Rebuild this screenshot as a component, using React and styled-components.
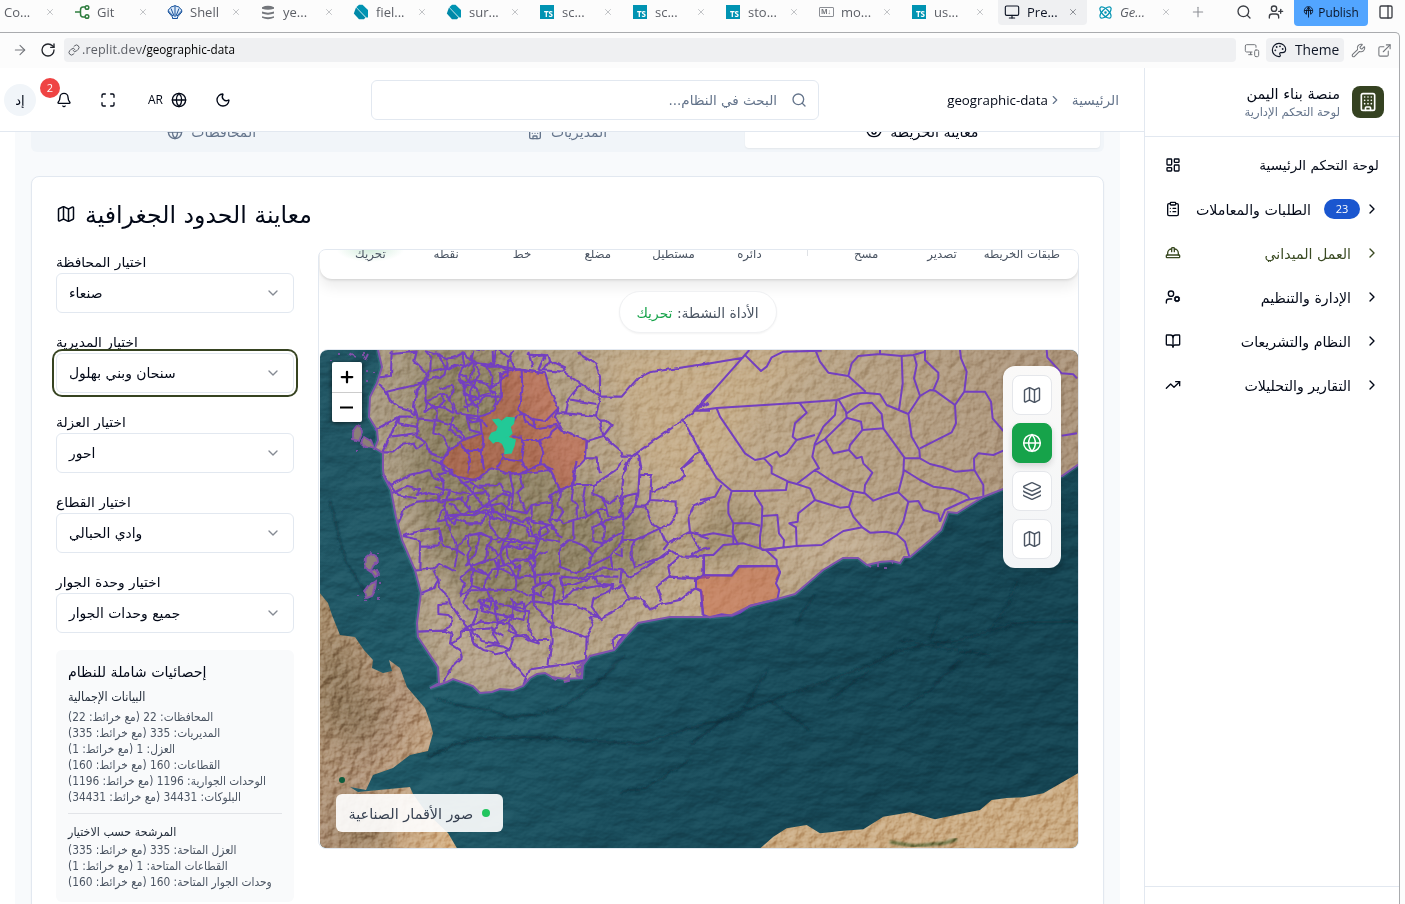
import React from "react";
import styled, { createGlobalStyle, css } from "styled-components";
import {
  ArrowRight, Bell, BookOpen, Building, ChevronDown, ChevronRight, ClipboardList,
  ExternalLink, Eye, Globe, HardHat, Layers, LayoutDashboard, Link as LinkIcon, Map as MapIcon,
  Maximize, Monitor, MonitorSmartphone, Moon, Palette, PanelRight, Plus, RotateCw,
  Search, TrendingUp, UserCog, UserPlus, Wrench, X, Atom,
} from "lucide-react";

const Global = createGlobalStyle`
  * { box-sizing: border-box; }
  html, body { margin: 0; height: 904px; overflow: hidden; background: #fcfcfc; }
  body { font-family: "Open Sans", "DejaVu Sans Condensed", "DejaVu Sans", sans-serif; color: #020817; }
  svg { display: block; flex: none; }
`;

const Screen = styled.div`
  width: 1405px; height: 904px; overflow: hidden;
  display: flex; flex-direction: column; background: #fcfcfc;
`;
const Ar = styled.span`
  direction: rtl; white-space: nowrap; line-height: 1; display: inline-block;
  padding-top: ${(p) => (p.$inner ? 0 : 2)}px;
  font-family: ${(p) => (p.$narrow ? '"DejaVu Sans Condensed", ' : "")}"DejaVu Sans", sans-serif;
  font-size: ${(p) => p.$size || 13.9}px;
  color: ${(p) => p.$color || "inherit"};
`;

/* ---------- workspace tabs ---------- */
const TabBar = styled.div`height: 32px; flex: none; display: flex; align-items: flex-start; overflow: hidden;`;
const Tabs = styled.div`display: flex; gap: 4px; margin-left: -25px; flex: none;`;
const Tab = styled.div`
  width: 89px; height: 25px; padding: 0 9px 1px 6px; display: flex; align-items: center;
  border-radius: 0 0 4px 4px; font-size: 13px; color: ${(p) => (p.$active ? "#0e1525" : "#5c5f66")};
  background: ${(p) => (p.$active ? "#eff0f2" : "transparent")};
  font-style: ${(p) => (p.$italic ? "italic" : "normal")};
  > svg:last-child { margin-left: auto; color: ${(p) => (p.$active ? "#777b82" : "#b5b7bb")}; }
`;
const TabIcon = styled.span`width: 16px; height: 16px; margin-right: 7px; display: flex; align-items: center; justify-content: center;`;
const TsBadge = styled.span`
  width: 14px; height: 14px; background: #0093b2; color: #fff; font: 700 8px/15px "Open Sans", sans-serif;
  padding-top: 1px; text-align: right; padding-right: 1px;
`;
const MdBadge = styled.span`
  width: 15px; height: 10px; border: 1px solid #8b8e94; border-radius: 1px; color: #74777c;
  font: 700 7px/8px "Open Sans", sans-serif; text-align: center;
`;
const BarIcons = styled.div`display: flex; align-items: center; gap: 16px; height: 25px; padding-bottom: 1px; color: #3b3e44;`;
const PlusCell = styled.span`margin: 0 30px 0 10px; color: #8b8e94;`;
const PublishBtn = styled.div`
  width: 74px; height: 26px; margin: 0 10px; border-radius: 0 0 4px 4px; background: #52a5ff; color: #0a1426;
  display: flex; align-items: center; justify-content: center; gap: 4px; font: 500 11.8px "Open Sans", sans-serif; padding-bottom: 2px;
`;

/* ---------- preview frame ---------- */
const Frame = styled.div`
  width: 1400px; height: 872px; border-top: 1px solid #a9abae; border-right: 1px solid #a9abae;
  border-radius: 0 5px 0 0; display: flex; flex-direction: column; overflow: hidden;
`;
const AddressRow = styled.div`
  height: 35px; flex: none; display: flex; align-items: center; padding: 0 8px 1px 12px; color: #74777c;
  > svg:nth-child(2) { margin-left: 12px; }
  > svg:nth-child(4) { margin-left: 8px; }
  > svg:last-child { margin-left: 11px; }
`;
const Url = styled.div`
  width: 1172px; height: 24px; margin-left: 8px; background: #eff0f2; border-radius: 4px; display: flex; align-items: center;
  flex: none; padding-left: 4px; font-size: 12.6px; letter-spacing: .15px; color: #5c5f66; line-height: 1;
  b { font-weight: 400; color: #000; font-size: 11.7px; letter-spacing: 0; }
  svg { margin-right: 2px; }
`;
const ThemeBtn = styled.div`
  width: 78px; height: 24px; margin: 0 7px 0 6px; background: #eff0f2; border-radius: 4px; color: #0e1525;
  display: flex; align-items: center; padding: 0 0 1px 5px; gap: 8px; font-size: 13.8px; flex: none;
`;
const AppShell = styled.div`flex: 1; min-height: 0; display: flex; background: #fff;`;
const Main = styled.div`width: 1144px; flex: none; display: flex; flex-direction: column; background: #fff;`;

const Header = styled.header`
  height: 64px; flex: none; border-bottom: 1px solid #e2e8f0; display: flex; align-items: center; padding: 0 25px 0 4px;
`;
const Avatar = styled.div`
  width: 32px; height: 32px; border-radius: 50%; background: #f1f5f9; display: flex; align-items: center; justify-content: center;
`;
const BellBox = styled.div`position: relative; margin-left: 20px; margin-right: 28px;`;
const Count = styled.span`
  position: absolute; left: -16px; top: -14px; width: 20px; height: 20px; border-radius: 50%; background: #ef4444; color: #fff;
  font-size: 11px; line-height: 20px; text-align: center;
`;
const Lang = styled.div`display: flex; align-items: center; gap: 8px; margin: 0 28px 0 32px; font-size: 12px;`;
const SearchBox = styled.div`
  width: 448px; height: 40px; margin-left: 140px; border: 1px solid #e2e8f0; border-radius: 6px;
  display: flex; align-items: center; justify-content: flex-end; gap: 14px; padding-right: 11px; color: #64748b;
`;
const Crumbs = styled.div`margin-left: auto; display: flex; align-items: center; font-size: 13.3px; svg { color: #64748b; margin: 0 10px 0 0; }`;

const Scroll = styled.div`
  flex: 1; min-height: 0; overflow: hidden; margin: 0 24px 0 15px; background: #f8fafc; padding: 0 16px;
`;
const Segments = styled.div`
  height: 40px; width: 1073px; margin-top: -20px; background: #f1f5f9; border-radius: 6px; padding: 3px 4px 3px 3px; display: flex;
`;
const Segment = styled.div`
  flex: 1; display: flex; align-items: center; justify-content: center; gap: 8px; border-radius: 4px; height: 33px;
  color: ${(p) => (p.$active ? "#020817" : "#64748b")};
  ${(p) => p.$active && css`background: #fff; box-shadow: 0 1px 2px rgba(0,0,0,.06);`}
`;
const Card = styled.section`
  width: 1073px; height: 900px; margin-top: 24px; border: 1px solid #e2e8f0; border-radius: 8px; background: #fff; padding: 24px;
  box-shadow: 0 1px 2px rgba(0,0,0,.05);
`;
const CardTitle = styled.div`
  display: flex; align-items: center; gap: 9px; height: 26px; margin-bottom: 22px;
  svg { margin-top: -1px; }
  span { padding-top: 4px; }
`;
const Split = styled.div`display: flex; align-items: flex-start; gap: 24px;`;
const Filters = styled.div`width: 238px; flex: none;`;
const Field = styled.div`height: 80px; display: flex; flex-direction: column;`;
const FieldLabel = styled.label`height: 24px; padding-top: 5px; line-height: 1; display: flex;`;
const Select = styled.div`
  height: 40px; border: 1px solid #e2e8f0; border-radius: 6px; background: #fff; padding: 0 12px;
  display: flex; align-items: center; justify-content: space-between;
  svg { color: #858a93; }
  ${(p) => p.$focus && css`box-shadow: 0 0 0 2px #fff, 0 0 0 4px #364321;`}
`;
const Stats = styled.div`
  margin-top: 1px; height: 252px; background: #f9fafb; border-radius: 6px; padding: 12px 12px; display: flex; flex-direction: column; align-items: flex-start;
`;
const StatHead = styled.div`height: ${(p) => p.$h}px; display: flex; align-items: center; padding-top: ${(p) => p.$drop || 0}px;`;
const StatLine = styled.div`height: 16px; display: flex; align-items: center;`;
const Rule = styled.div`height: 1px; width: 214px; background: #e2e4e8; margin: 8px 0 6px;`;

const MapPanel = styled.div`
  width: 761px; height: 600px; border: 1px solid #e2e8f0; border-radius: 8px; overflow: hidden; background: #fff;
  display: flex; flex-direction: column; align-items: center; padding: 0 1px;
`;
const Toolbar = styled.div`
  width: 758px; height: 29px; flex: none; border-radius: 0 0 12px 12px;
  box-shadow: 0 8px 14px rgba(0,0,0,.08), 0 1px 3px rgba(0,0,0,.13); background: #fff;
`;
const ToolRow = styled.div`height: 29px; overflow: hidden; display: flex; padding: 0 16px 0 13px;`;
const Tool = styled.div`
  width: ${(p) => p.$w || 75.8}px; flex: none; display: flex; justify-content: center; margin-top: -3px; white-space: nowrap;
  ${(p) => p.$active && css`background: radial-gradient(ellipse 34px 13px at 50% 2px, rgba(22,163,74,.2), transparent);`}
`;
const ToolSplit = styled.div`width: 1px; height: 6px; flex: none; background: #dfe2e6; margin: 0 20px 0 20px;`;
const ActiveTool = styled.div`
  margin: 12px 2px 16px 0; height: 42px; width: 158px; flex: none; border-radius: 21px; border: 1px solid #f0f1f3; background: #fff;
  box-shadow: 0 1px 2px rgba(0,0,0,.05); display: flex; align-items: center; justify-content: center; padding-top: 2px;
`;
const MapView = styled.div`
  width: 758px; height: 499px; flex: none; position: relative; border-radius: 8px 8px 6px 6px; overflow: hidden; border-top: 1px solid #e2e8f0;
`;
const ZoomCtl = styled.div`
  position: absolute; left: 12px; top: 12px; width: 30px; height: 60px; border-radius: 2px; background: #fff; box-shadow: 0 1px 5px rgba(0,0,0,.65);
  display: flex; flex-direction: column;
`;
const ZoomKey = styled.div`
  flex: 1; display: flex; align-items: center; justify-content: center; color: #000;
  & + & { border-top: 1px solid #ccc; }
`;
const LayerPanel = styled.div`
  position: absolute; left: 683px; top: 16px; width: 58px; height: 202px; border-radius: 12px; padding: 9px;
  background: linear-gradient(#faf9f8, #f3f5f7); display: flex; flex-direction: column; gap: 8px;
  box-shadow: 0 2px 6px rgba(0,0,0,.12);
`;
const LayerKey = styled.div`
  height: 40px; border-radius: 8px; display: flex; align-items: center; justify-content: center;
  border: 1px solid ${(p) => (p.$active ? "#16a34a" : "#e5e7eb")};
  background: ${(p) => (p.$active ? "#16a34a" : "#fff")}; color: ${(p) => (p.$active ? "#fff" : "#4b5563")};
  box-shadow: ${(p) => (p.$active ? "0 3px 6px rgba(0,0,0,.14)" : "none")};
`;
const MapCaption = styled.div`
  position: absolute; left: 16px; top: 444px; width: 167px; height: 38px; border-radius: 6px; background: rgba(255,255,255,.91);
  display: flex; align-items: center; justify-content: space-between; padding: 0 13px; color: #374151;
`;
const Dot = styled.i`width: 8px; height: 8px; border-radius: 50%; background: #22c55e;`;

/* ---------- side navigation ---------- */
const Side = styled.aside`flex: 1; border-left: 1px solid #e2e8f0; display: flex; flex-direction: column; background: #fff;`;
const Brand = styled.div`
  height: 69px; border-bottom: 1px solid #e2e8f0; display: flex; align-items: center; justify-content: flex-end; gap: 12px; padding-right: 15px;
`;
const BrandText = styled.div`display: flex; flex-direction: column; align-items: flex-end; gap: 3px;`;
const Logo = styled.div`
  width: 32px; height: 32px; border-radius: 8px; background: #354221; color: #fff; display: flex; align-items: center; justify-content: center;
`;
const Nav = styled.nav`flex: 1; padding: 8px 20px 0 20px; display: flex; flex-direction: column; gap: 4px;`;
const NavItem = styled.div`
  height: 40px; display: flex; align-items: center; color: ${(p) => (p.$accent ? "#3a4a22" : "#020817")};
  > span:first-of-type { margin-left: auto; }
`;
const NavBadge = styled.b`
  width: 36px; height: 20px; border-radius: 10px; background: #1a56cf; color: #fff; font-size: 11px; font-weight: 400;
  line-height: 20px; text-align: center; margin-left: 13px; margin-right: -9px;
`;
const NavChevron = styled.i`margin: 0 -1px 0 13px; display: flex;`;
const SideFoot = styled.div`height: 18px; border-top: 1px solid #e2e8f0;`;

/* ---------- small drawings ---------- */
const GitGlyph = () => (
  <svg width="16" height="16" viewBox="0 0 16 16" fill="none" stroke="#2f7d3f" strokeWidth="1.5">
    <path d="M1 8h5M12 3H9Q6.500 3 6.500 6v4q0 3 2.500 3h3" /><circle cx="13" cy="3.500" r="1.800" /><circle cx="13" cy="12.500" r="1.800" />
  </svg>
);
const ShellGlyph = () => (
  <svg width="16" height="16" viewBox="0 0 16 16" fill="#dceafa" stroke="#17529c" strokeWidth="1">
    <path d="M5.500 13 1.200 8Q.7 5 3 4.500 4 2 6 2.500 8 .5 10 2.500q2-.5 3 2 2.300.5 1.800 3.500L10.500 13v1.500h-5z" />
    <path d="M8 13V2M7 12 4 4.500M9 12l3-7.500M6 12 1.500 7M10 12l4.500-5" fill="none" />
  </svg>
);
const DatabaseGlyph = () => (
  <svg width="14" height="15" viewBox="0 0 14 15" fill="#74777c">
    <path d="M1 2.200Q7-.6 13 2.200v1.500Q7 6 1 3.700zM1 6.500Q7 8.800 13 6.500v2Q7 10.800 1 8.500zM1 11.200q6 2.300 12 0v1.600q-6 2.700-12 0z" />
  </svg>
);
const DartGlyph = () => (
  <svg width="16" height="16" viewBox="0 0 16 16">
    <path fill="#0093b2" d="M3.500 3 6 .8h3.500L15 6v7.500h-2L3.500 4z" />
    <path fill="#0089a8" d="M3 3.500 12.500 13.500 11 15.200H6L.8 9.500z" />
    <path fill="none" stroke="#fff" strokeWidth=".5" d="m3.200 3.200 10 10.500" />
  </svg>
);
const PublishGlyph = () => (
  <svg width="11" height="12" viewBox="0 0 11 12" fill="none" stroke="currentColor" strokeWidth=".9">
    <path d="M3.500 8.500A4.200 4.200 0 1 1 7.500 8.500M1.500 4.500h8M5.500 1v10.500M3.500 8Q2.500 4 5.500 1q3 3 2 7" />
  </svg>
);

/* ---------- map geometry ---------- */
const COAST = "M378 350L382 367 377 383 370 397 369 417 377 430 378 440 375 448 383 453 383 470 384 477 391 490 396 517 402 540 415 570 421 593 417 623 418 637 438 667 439 683 430 688 447 682 453 679 473 686 480 693 492 692 500 689 513 690 523 686 530 678 537 674 545 673 552 677 565 679 582 678 583 665 590 656 614 650 625 637 638 623 670 617 710 617 732 615 750 606 777 599 795 594 823 570 843 558 858 558 867 565 880 562 892 561 900 563 904 557 910 557 930 540 941 530 948 512 957 513 983 497 1003 489 1062 476 1079 464";
const LAND = COAST + "V349H378Z";
const AFRICA = "M319 592L328 603 332 615 340 635 355 637 364 650 373 660 372 668 383 673 392 671 389 660 400 668 407 687 425 708 430 722 433 733 428 751 410 755 393 768 373 775 366 790 350 787 358 792 410 787 413 794 426 812 448 833 458 850H319Z";
const SOMALIA = "M205 870L250 830 290 805 350 795 390 820 450 813 520 808 580 770 660 757 735 778 820 760 870 750 905 720 950 714 1000 712 1060 700 1120 665 1164 640V870Z";
const ORANGE = "M18 60L40 45 125 47 148 20 262 18 270 38 258 70 268 90 262 118 180 137 150 158 125 167 95 163 60 172 40 165 32 90 18 85Z";
const RED = "M575 400L625 388 705 400 720 450 745 505 735 530 760 575 830 600 828 655 795 690 790 735 750 750 720 690 640 700 590 700 545 685 495 720 440 710 395 670 420 625 460 600 515 580 510 530 550 515 575 470Z";
const GREEN = "M550 540L565 538 575 545 590 533 612 535 610 550 600 560 605 580 592 592 615 600 612 615 603 638 585 640 586 628 578 610 560 600 550 608 538 595 545 580 560 575 566 560Z";

const EAST = "M0 497L148 330M0 375L130 353M133 343L183 393 200 380 215 352 250 335 365 332M0 511L50 504 300 488 410 480 460 462 490 458 540 463 560 495 625 522 660 468 690 450 705 452 765 495 768 550 755 577 660 625M348 335L360 365 385 398 445 408 497 455M445 408L455 370 475 348 540 342 605 348 640 345 675 335M540 330V345M605 348L608 430 597 510M642 345L650 375 642 415 660 468M675 330V360L715 398 715 415 700 450M780 330L783 355 800 395 793 455 765 495M793 455H855L873 485 878 535 910 573M1040 330L1042 352 1085 400 1120 403 1131 415M1085 587L1131 580M625 522L635 590 658 630 660 655 615 655 550 565 487 570 483 545 440 533 438 515 415 478M438 522L480 492 515 488 545 522 550 565M410 480L405 525 370 560 345 610 337 650 357 685 345 690M440 533L375 597 400 640 447 630 450 615 487 570M375 597L345 615M447 630L470 655 485 650 490 670 517 698 495 735 493 758 520 782 565 765 595 757 610 700 612 655M50 505L60 530 135 640 165 660 192 655 215 680 215 700 265 725 290 732 345 690 390 720 450 752 493 760M298 488L320 518 285 550 278 590 290 600 260 640 240 650 230 635 192 655M290 600L345 585M0 630L50 715 95 753 165 753 258 750 262 725M0 780L45 770 65 735M95 753L85 790V820L100 850 98 880 115 915M290 732L330 745 345 780 420 803 447 800 460 758M345 780L295 820 293 845 268 850 288 862 290 918 185 930M165 753V765L187 800 185 855 180 890 180 920 187 930H230M187 828L232 825 237 880 252 900 250 925M98 850L150 850 180 857M290 918L365 915 430 873 487 862 510 878 560 875 590 883 615 905 628 950M447 800L460 830 487 862M595 757L625 785 610 845 590 883M625 785L655 783 670 810 715 822 720 845M612 690L660 720 700 740 760 748 800 765 810 778M660 655L690 672 730 682 765 695 823 690 822 655 835 640 880 645 910 632M823 690L850 735V770M720 845L735 810 800 780 850 770M0 888L40 880 100 890M100 890V910M12 945L40 945 70 915 130 910 200 932 230 960V978H115L95 1005 12 1007ZM230 978L240 995 228 1020";
const NORTH = "M245 332L243 408 207 412M245 342L320 335 313 362 350 400 340 430 230 455 207 435M230 455L240 480 265 500 300 510 318 525M195 570L230 550 268 530 310 530M345 425L320 450 312 500 322 530 322 590 350 610 360 640 400 655M218 637L250 637 275 615 310 608 320 625 345 610M225 625L240 590 320 580M215 640L240 590 255 555 268 530 265 550 320 560M320 535L380 540 380 510 345 480M490 332L485 355 500 370 550 375 548 332M610 332L600 350 615 388 570 400 575 470 520 470 500 500M555 375L615 388 705 400M650 340L705 345 685 390M655 332L668 385M665 350L715 345 720 362 765 382 755 395 685 390M720 362L700 390M760 395L810 430 870 470H935L985 413 1020 397 1200 370M808 332L812 345 855 370 870 410 870 470 858 530 870 545 880 588 930 630 935 650 965 650 985 635 1120 540 1170 500 1200 488M810 435L775 478 768 520 860 530M775 478L860 492M870 542L890 542 905 555 880 588 830 603M1120 540L1168 630 1115 687M1168 630L1200 680M1155 512L1200 460M1155 512H1200M985 635L995 690M965 650L940 690M745 505L740 520 768 520M830 603L828 655 860 655 865 690M510 530L440 520 430 490M515 580L480 570 470 530 510 540M400 655L420 625 400 590 370 580 375 540 430 555 470 600M460 600L420 570 430 530";
const REDLINES = "M635 388L637 450 625 510 640 520 670 540 705 545 745 505M515 580L520 600 515 640 522 690M470 630L480 660 475 700M515 630L470 630M605 590L635 590 640 630 635 665 600 660 580 655 560 685M635 600L690 600 700 640 690 670 730 690M640 520L620 530 605 545M640 520L645 545 680 565 740 555 760 575M580 655L580 640M690 600L720 590 725 575 745 560M450 610L475 640M635 665L650 690M670 540L675 565";
const SOUTH = "M218 45L243 75 300 45 360 30 370 55 400 65 385 45 430 30M365 0L395 10 400 30 440 50 460 70 520 50M245 100L260 95 290 80 330 90 320 105 350 98 385 105 385 120 320 125 285 145 262 195M243 75L265 105 320 115M400 65L400 90 385 125 460 115M400 130L410 165 430 190 440 175 470 190 515 190 540 145M275 228L320 215 388 205 390 240 385 260 330 260 328 330M275 228L330 240V260M388 205L400 255 440 270 465 285M315 332L370 325 390 310 435 335M332 400L370 385 385 360 370 330M385 360L390 385 415 410 420 430 465 495M415 430L385 432 385 462 415 465 425 475 422 500 400 512 320 515M400 512L425 520 420 550 450 570 455 590 430 615 400 665M420 550L455 530 455 510 480 510 490 550 520 570 560 580 600 570 610 530 640 525 665 540H718M455 510L510 485 600 490 620 520M465 495L480 510 540 505 580 530M585 575L605 605 648 655 660 628 715 620 725 540 722 505 740 500 830 532 828 600 775 612 715 620M640 675L660 628M830 532L850 495 838 470 870 475 920 450 958 415 990 415M722 505L730 495 728 430 668 425 640 445 610 440 560 430M668 425L690 460 730 495M728 430L765 415M958 415L935 375 850 415 845 440 870 475M870 475L800 435 735 430M990 410L1020 448 1060 430 1110 420 1155 385V355L1080 350 1040 380 1055 425M1155 355L1200 350M1155 385L1175 395 1178 465M1080 350L1075 320 1110 290 1140 290 1200 285M1180 290V345M1110 290L1080 270 1040 300 965 352 935 330 870 325 820 355 750 350M940 240H960L975 240 965 260 965 290 975 320 1060 290 1080 270M975 240L1050 205 1065 240 1075 250 1060 270M1075 250L1140 215 1170 270 1140 290M1140 215L1200 235M1170 270L1200 265M1050 205L1025 190 1005 140 1020 120 1100 125V160L1070 200 1050 205M1020 120L1025 45 990 45M1200 115L1150 140 1135 170 1140 215M1025 95L1110 60 1125 45 1115 25 1150 0M940 0L920 30 850 75 850 100 870 110 885 130 890 150 865 150 830 170 790 180 760 190 750 180 720 180 730 150 720 110 750 90 790 75 850 75M750 90L725 40 700 10 630 40M785 75L800 0M860 0L870 40M960 0L935 50 940 60 930 130 940 170 940 240M990 0L985 100 940 110 930 160M985 100L975 140 1005 140M870 110L900 130 925 110M975 140L945 180M865 150L875 190 850 200 850 245 880 250 885 200 875 190 935 165M890 150L895 170 920 175M845 282L880 250 940 215M750 260L775 240 820 255 845 285 838 320 800 340 750 320ZM790 180V240M838 320L900 290 940 240M905 290L910 325M935 265V290L915 280M935 330L930 370M630 40L600 45 610 90 605 150M630 40L640 80 620 100 650 160 600 150 575 130 520 140 490 100 460 70M520 140L580 100 605 110M650 160L665 135 720 125M665 135V185L720 195 740 220 760 230M720 180L740 220M545 145L590 180 650 200 655 230 690 225 690 205 720 195M655 230L750 245M790 75L785 120 800 135 800 180M825 80L820 110 830 170M750 90L745 140 760 155 740 185M735 390L710 365 670 380 668 425M728 430L735 390M765 415L790 390 850 380 910 375M750 350L760 375 790 375 850 350 925 350M750 350L755 375 765 415M850 350L860 370 910 375 900 400M690 350V375M750 340L680 345M905 540L925 525 945 525 910 570ZM420 130L460 165 485 165 520 140M410 120L450 115 485 155M600 570L580 560 550 555 525 560M560 430L520 420 515 450 550 460 640 480 645 460 600 440";

function mesh(x0, y0, x1, y1, step, seed) {
  let s = seed;
  const rnd = () => ((s = (s * 16807) % 2147483647) / 2147483647);
  const cols = Math.round((x1 - x0) / step);
  const rows = Math.round((y1 - y0) / step);
  const pts = [];
  for (let r = 0; r <= rows; r++) {
    pts.push([]);
    for (let c = 0; c <= cols; c++) {
      pts[r].push([x0 + (c + (rnd() - 0.5) * 0.9) * step, y0 + (r + (rnd() - 0.5) * 0.9) * step]);
    }
  }
  let d = "";
  const edge = (a, b) => {
    if (rnd() < 0.22) return;
    const mx = (a[0] + b[0]) / 2 + (rnd() - 0.5) * step * 0.6;
    const my = (a[1] + b[1]) / 2 + (rnd() - 0.5) * step * 0.6;
    d += `M${a[0].toFixed(1)} ${a[1].toFixed(1)}L${mx.toFixed(1)} ${my.toFixed(1)} ${b[0].toFixed(1)} ${b[1].toFixed(1)}`;
  };
  for (let r = 0; r <= rows; r++)
    for (let c = 0; c <= cols; c++) {
      if (c < cols) edge(pts[r][c], pts[r][c + 1]);
      if (r < rows) edge(pts[r][c], pts[r + 1][c]);
    }
  return d;
}
const DENSE = [
  mesh(430, 355, 476, 408, 11, 77), mesh(464, 384, 496, 422, 13, 31), mesh(476, 352, 506, 385, 16, 9),
  mesh(474, 538, 530, 578, 12, 123), mesh(454, 520, 558, 592, 19, 55), mesh(482, 598, 498, 614, 7, 812),
  mesh(472, 596, 530, 632, 20, 44), mesh(444, 478, 506, 522, 20, 91),
].join("");
const ISLETS = "M366 557l5 -4 5 3 1 6 -4 4 -2 6 -6 -4zM372 572l5 -2 2 4 -4 3zM364 592l4 -5 5 -4 3 -2 -1 8 -4 7 -5 2zM378 553v1M380 582v2M379 589v2M378 597v2M366 600v1M358 595v1M374 562l3 2M353 433l6 -8 4 6 -4 10 -6 -2zM364 437l7 4 3 8 -8 -2 -5 -4zM357 450v2M349 354l6 3M365 360l3 -6M368 370v2M367 380v2M374 372v1M330 360v2M364 352v5M340 353v2M565 583v2M577 666l5 -4v7l-6 1M563 679l6 -3v5l-5 1M573 667l5 6 4 -3v8l-6 -3M552 678l5 2M868 565l3 2M885 567v2M878 562v4M892 562l2 2";
const at = (x, y) => `translate(${x} ${y}) scale(.33333)`;

const SatelliteMap = () => (
  <svg width="758" height="498" viewBox="320 350 758 498">
    <defs>
      <linearGradient id="sea" x1="0" y1="0" x2="1" y2=".35">
        <stop offset="0" stopColor="#205462" /><stop offset=".35" stopColor="#1f5866" /><stop offset=".65" stopColor="#194c5b" /><stop offset="1" stopColor="#154452" />
      </linearGradient>
      <linearGradient id="soil" x1="0" y1="0" x2="1" y2="0">
        <stop offset="0" stopColor="#ab9c86" /><stop offset=".15" stopColor="#a5967b" /><stop offset=".38" stopColor="#b5a286" />
        <stop offset=".5" stopColor="#c0aa8b" /><stop offset=".7" stopColor="#b6a184" /><stop offset="1" stopColor="#aa937a" />
      </linearGradient>
      <linearGradient id="horn" x1="0" y1="0" x2="1" y2="1">
        <stop offset="0" stopColor="#a48a68" /><stop offset=".5" stopColor="#ad9075" /><stop offset="1" stopColor="#dcb788" />
      </linearGradient>
      <filter id="relief" x="0" y="0" width="100%" height="100%" colorInterpolationFilters="sRGB">
        <feTurbulence type="fractalNoise" baseFrequency=".11" numOctaves="6" seed="4" />
        <feDiffuseLighting surfaceScale="3" diffuseConstant=".78" lightingColor="#fff"><feDistantLight azimuth="225" elevation="43" /></feDiffuseLighting>
      </filter>
      <filter id="seabed" x="0" y="0" width="100%" height="100%" colorInterpolationFilters="sRGB">
        <feTurbulence type="fractalNoise" baseFrequency=".03 .05" numOctaves="5" seed="12" />
        <feDiffuseLighting surfaceScale="4" diffuseConstant=".77" lightingColor="#fff"><feDistantLight azimuth="240" elevation="43" /></feDiffuseLighting>
      </filter>
      <filter id="rough" x="-5%" y="-5%" width="110%" height="110%" colorInterpolationFilters="sRGB">
        <feTurbulence type="fractalNoise" baseFrequency=".12" numOctaves="2" seed="8" />
        <feDisplacementMap in="SourceGraphic" scale="4" xChannelSelector="R" yChannelSelector="G" />
      </filter>
      <filter id="soft"><feGaussianBlur stdDeviation="14" /></filter>
      <filter id="soft2"><feGaussianBlur stdDeviation="1.200" /></filter>
      <clipPath id="land"><path d={LAND} /></clipPath>
      <clipPath id="shores"><path d={AFRICA} /><path d={SOMALIA} transform={at(690, 560)} /></clipPath>
    </defs>
    <rect x="320" y="350" width="758" height="498" fill="url(#sea)" />
    <g fill="none" stroke="#0d3543" filter="url(#rough)">
      <g filter="url(#soft2)" opacity=".85" strokeWidth="1.800">
        <path d="M428 757L455 744 480 739 530 737 580 740 640 744 700 725 740 715" strokeWidth="2.500" />
        <path d="M434 697L460 706 490 710 510 718 540 714 570 703 600 680 625 655" />
        <path d="M690 745L730 715 760 705 800 690 830 680 870 665 900 650 925 645 960 640 985 632 1020 622 1078 622" strokeWidth="2.500" />
        <path d="M740 715L755 690 768 670M795 625L815 594M930 640L940 616M985 635L1005 610 1018 580M770 700L810 730M830 700L870 670M900 640L955 650 990 655" />
        <path d="M620 792L645 788 690 760M900 710L930 690 960 660M330 500L345 560 370 600" />
      </g>
    </g>
    <rect x="320" y="350" width="758" height="498" filter="url(#seabed)" style={{ mixBlendMode: "soft-light" }} opacity=".35" />
    <path d={COAST} fill="none" stroke="#37808a" strokeWidth="5" opacity=".45" />
    <g clipPath="url(#land)">
      <rect x="320" y="350" width="758" height="350" fill="url(#soil)" />
      <g filter="url(#soft)">
        <path d="M425 350H500L560 480 640 500 660 570 560 600 490 630 440 600 410 480Z" fill="#81765a" opacity=".7" />
        <path d="M600 350H820L760 400 700 500 640 460Z" fill="#c6ad88" opacity=".8" />
        <path d="M383 460L400 540 420 600 440 680 520 690 600 640 500 645 430 560Z" fill="#b9a78f" opacity=".9" />
        <path d="M780 560L850 515 900 560ZM780 530h70v30h-70z" fill="#c6b196" opacity=".8" />
        <path d="M720 490L780 530 740 560 680 560Z" fill="#8a7b5c" opacity=".6" />
      </g>
      <rect x="370" y="350" width="710" height="345" filter="url(#relief)" style={{ mixBlendMode: "soft-light" }} opacity=".5" />
    </g>
    <g clipPath="url(#shores)">
      <rect x="320" y="580" width="150" height="270" fill="url(#horn)" />
      <rect x="740" y="770" width="340" height="80" fill="#c9a980" />
      <path d="M890 842l25 4 30 -3 12 -4" stroke="#5c6535" strokeWidth="3" fill="none" filter="url(#soft2)" />
      <path d="M320 640l30 10 10 40 30 20 -30 40 -40 -30zM340 810h50v40h-50z" fill="#7b684c" opacity=".6" filter="url(#soft)" />
      <rect x="320" y="580" width="760" height="270" filter="url(#relief)" style={{ mixBlendMode: "soft-light" }} opacity=".8" />
    </g>
    <g filter="url(#rough)">
      <path d={RED} transform={at(310, 240)} fill="#cc4b38" fillOpacity=".42" />
      <g fill="none" stroke="#733fc0" strokeWidth="6.300" strokeLinejoin="round">
        <path d={NORTH} transform={at(310, 240)} />
        <path d={REDLINES} transform={at(310, 240)} />
        <path d={SOUTH} transform={at(310, 460)} />
      </g>
      <path d={RED} transform={at(310, 240)} fill="none" stroke="#733fc0" strokeWidth="6" />
      <path d={DENSE} fill="none" stroke="#733fc0" strokeWidth="2" />
      <path d={ISLETS} fill="#8c7f78" stroke="#8350ab" strokeWidth="1.800" />
    </g>
    <g fill="none" stroke="#733fc0" strokeWidth="6" strokeLinejoin="round"><path d={EAST} transform={at(700, 240)} /></g>
    <path d={ORANGE} transform={at(690, 560)} fill="#d0603f" fillOpacity=".45" stroke="#733fc0" strokeWidth="6" />
    <path d={COAST} fill="none" stroke="#8053ad" strokeWidth="2" />
    <path d={GREEN} transform={at(310, 240)} fill="#22c997" stroke="#22c997" strokeWidth="5" />
    <circle cx="342" cy="780" r="3" fill="#0c5c3c" />
  </svg>
);

const TABS = [
  ["Co...", null], ["Git", <GitGlyph />], ["Shell", <ShellGlyph />], ["ye...", <DatabaseGlyph />], ["fiel...", <DartGlyph />],
  ["sur...", <DartGlyph />], ["sc...", <TsBadge>TS</TsBadge>], ["sc...", <TsBadge>TS</TsBadge>], ["sto...", <TsBadge>TS</TsBadge>],
  ["mo...", <MdBadge>M↓</MdBadge>], ["us...", <TsBadge>TS</TsBadge>], ["Pre...", <Monitor size={16} strokeWidth={1.7} />, "active"],
  ["Ge...", <Atom size={15} color="#0093b2" strokeWidth={2} />, "italic"],
];
const FIELDS = [
  ["اختيار المحافظة", "صنعاء"], ["اختيار المديرية", "سنحان وبني بهلول"], ["اختيار العزلة", "احور"],
  ["اختيار القطاع", "وادي الحبالي"], ["اختيار وحدة الجوار", "جميع وحدات الجوار"],
];
const TOTALS = [
  "المحافظات: 22 (مع خرائط: 22)", "المديريات: 335 (مع خرائط: 335)", "العزل: 1 (مع خرائط: 1)",
  "القطاعات: 160 (مع خرائط: 160)", "الوحدات الجوارية: 1196 (مع خرائط: 1196)", "البلوكات: 34431 (مع خرائط: 34431)",
];
const FILTERED = ["العزل المتاحة: 335 (مع خرائط: 335)", "القطاعات المتاحة: 1 (مع خرائط: 1)", "وحدات الجوار المتاحة: 160 (مع خرائط: 160)"];
const TOOLS = ["تحريك", "نقطه", "خط", "مضلع", "مستطيل", "دائره"];
const NAV = [
  { icon: LayoutDashboard, text: "لوحة التحكم الرئيسية", leaf: true, size: 13.6 },
  { icon: ClipboardList, text: "الطلبات والمعاملات", badge: "23" },
  { icon: HardHat, text: "العمل الميداني", accent: true },
  { icon: UserCog, text: "الإدارة والتنظيم" },
  { icon: BookOpen, text: "النظام والتشريعات" },
  { icon: TrendingUp, text: "التقارير والتحليلات" },
];

export default function App() {
  return (
    <Screen>
      <Global />
      <TabBar>
        <Tabs>
          {TABS.map(([name, icon, kind], i) => (
            <Tab key={i} $active={kind === "active"} $italic={kind === "italic"}>
              <TabIcon>{icon}</TabIcon>{name}<X size={10} strokeWidth={2} />
            </Tab>
          ))}
        </Tabs>
        <BarIcons>
          <PlusCell><Plus size={16} strokeWidth={1.6} /></PlusCell>
        </BarIcons>
        <BarIcons>
          <Search size={16} />
          <UserPlus size={16} />
        </BarIcons>
        <PublishBtn><PublishGlyph />Publish</PublishBtn>
        <BarIcons><PanelRight size={16} /></BarIcons>
      </TabBar>
      <Frame>
        <AddressRow>
          <ArrowRight size={16} strokeWidth={1.6} />
          <RotateCw size={16} color="#22252b" />
          <Url><LinkIcon size={12} />.replit.dev<b>/geographic-data</b></Url>
          <MonitorSmartphone size={16} strokeWidth={1.5} />
          <ThemeBtn><Palette size={16} strokeWidth={1.7} />Theme</ThemeBtn>
          <Wrench size={15} strokeWidth={1.7} />
          <ExternalLink size={15} strokeWidth={1.7} />
        </AddressRow>
        <AppShell>
          <Main>
            <Header>
              <Avatar><Ar $size={13}>إد</Ar></Avatar>
              <BellBox><Bell size={16} /><Count>2</Count></BellBox>
              <Maximize size={16} />
              <Lang>AR<Globe size={16} /></Lang>
              <Moon size={16} />
              <SearchBox><Ar $size={13.5}>البحث في النظام...</Ar><Search size={16} /></SearchBox>
              <Crumbs>geographic-data<ChevronRight size={14} /><Ar $size={13.7} $color="#64748b">الرئيسية</Ar></Crumbs>
            </Header>
            <Scroll>
              <Segments>
                <Segment><Globe size={16} /><Ar>المحافظات</Ar></Segment>
                <Segment><Building size={16} /><Ar>المديريات</Ar></Segment>
                <Segment $active><Eye size={16} /><Ar $size={14.3}>معاينة الخريطة</Ar></Segment>
              </Segments>
              <Card>
                <CardTitle><MapIcon size={20} strokeWidth={1.8} /><Ar $size={23.6}>معاينة الحدود الجغرافية</Ar></CardTitle>
                <Split>
                  <Filters>
                    {FIELDS.map(([label, value], i) => (
                      <Field key={label}>
                        <FieldLabel><Ar $size={13.8}>{label}</Ar></FieldLabel>
                        <Select $focus={i === 1}><Ar>{value}</Ar><ChevronDown size={16} /></Select>
                      </Field>
                    ))}
                    <Stats>
                      <StatHead $h={18}><Ar $size={14.2}>إحصائيات شاملة للنظام</Ar></StatHead>
                      <StatHead $h={29} $drop={4}><Ar $size={12.6} $narrow $color="#1f2937">البيانات الإجمالية</Ar></StatHead>
                      {TOTALS.map((t) => <StatLine key={t}><Ar $size={11.8} $narrow $color="#4b5563">{t}</Ar></StatLine>)}
                      <Rule />
                      <StatHead $h={22}><Ar $size={12.4} $narrow $color="#1f2937">المرشحة حسب الاختيار</Ar></StatHead>
                      {FILTERED.map((t) => <StatLine key={t}><Ar $size={11.8} $narrow $color="#4b5563">{t}</Ar></StatLine>)}
                    </Stats>
                  </Filters>
                  <MapPanel>
                    <Toolbar>
                      <ToolRow>
                        {TOOLS.map((t, i) => <Tool key={t} $active={i === 0}><Ar $size={11.8} $color="#4b5563">{t}</Ar></Tool>)}
                        <ToolSplit />
                        <Tool><Ar $size={11.8} $color="#4b5563">مسح</Ar></Tool>
                        <Tool><Ar $size={11.8} $color="#4b5563">تصدير</Ar></Tool>
                        <Tool $w={84}><Ar $size={11.6} $color="#4b5563">طبقات الخريطه</Ar></Tool>
                      </ToolRow>
                    </Toolbar>
                    <ActiveTool><Ar $color="#4b5563">الأداة النشطة: <Ar $inner $color="#16a34a">تحريك</Ar></Ar></ActiveTool>
                    <MapView>
                      <SatelliteMap />
                      <ZoomCtl>
                        <ZoomKey><Plus size={18} strokeWidth={3} /></ZoomKey>
                        <ZoomKey><svg width="13" height="3"><rect width="13" height="2" y=".5" /></svg></ZoomKey>
                      </ZoomCtl>
                      <LayerPanel>
                        <LayerKey><MapIcon size={20} strokeWidth={1.7} /></LayerKey>
                        <LayerKey $active><Globe size={20} strokeWidth={1.8} /></LayerKey>
                        <LayerKey><Layers size={20} strokeWidth={1.7} /></LayerKey>
                        <LayerKey><MapIcon size={20} strokeWidth={1.7} /></LayerKey>
                      </LayerPanel>
                      <MapCaption><Ar $size={14.4}>صور الأقمار الصناعية</Ar><Dot /></MapCaption>
                    </MapView>
                  </MapPanel>
                </Split>
              </Card>
            </Scroll>
          </Main>
          <Side>
            <Brand>
              <BrandText><Ar $size={14.5}>منصة بناء اليمن</Ar><Ar $size={11.6} $color="#64748b">لوحة التحكم الإدارية</Ar></BrandText>
              <Logo><Building size={20} /></Logo>
            </Brand>
            <Nav>
              {NAV.map(({ icon: Icon, text, badge, leaf, accent, size }) => (
                <NavItem key={text} $accent={accent}>
                  <Icon size={16} />
                  <Ar $size={size || 14.2}>{text}</Ar>
                  {badge && <NavBadge>{badge}</NavBadge>}
                  {!leaf && <NavChevron><ChevronRight size={16} /></NavChevron>}
                </NavItem>
              ))}
            </Nav>
            <SideFoot />
          </Side>
        </AppShell>
      </Frame>
    </Screen>
  );
}
